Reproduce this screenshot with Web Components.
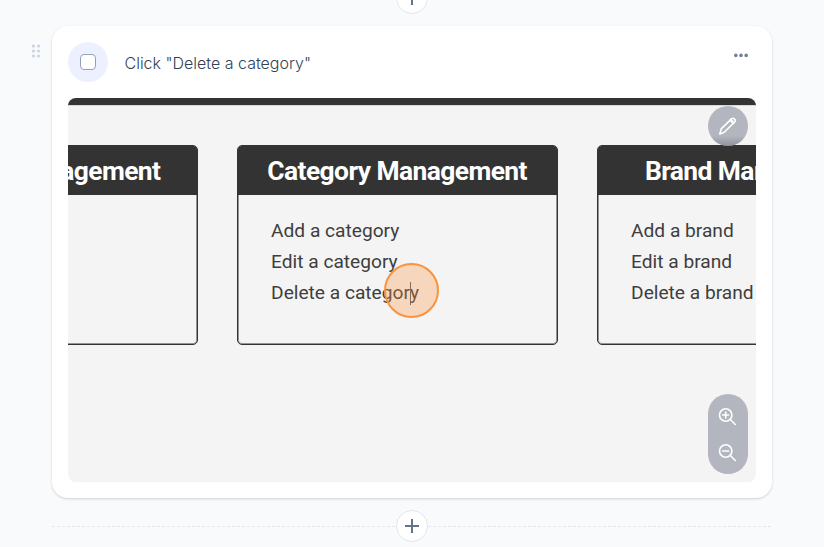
<!DOCTYPE html>
<html lang="en">
<head>
<meta charset="utf-8">
<title>Guide step</title>
<style>
html,body{margin:0;height:100%;overflow:hidden}
body{background:#f9fafc;font-family:Inter,sans-serif;color:#334155}
</style>
</head>
<body>
<guide-page>
  <add-step plain></add-step>
  <step-card>
    <span slot="title">Click "Delete a category"</span>
    <screen-shot>
      <menu-panel><span slot="head">agement</span></menu-panel>
      <menu-panel><span slot="head">Category Management</span><span>Add a category</span><span>Edit a category</span><span>Delete a category</span></menu-panel>
      <menu-panel><span slot="head">Brand Man</span><span>Add a brand</span><span>Edit a brand</span><span>Delete a brand</span></menu-panel>
    </screen-shot>
  </step-card>
  <add-step></add-step>
</guide-page>
<script>
const define = (name, html) => customElements.define(name, class extends HTMLElement {
  constructor() { super(); this.attachShadow({mode: 'open'}).innerHTML = html; }
});

define('guide-page', `<style>
:host{display:flex;flex-direction:column;width:720px;margin:-18px auto 0;gap:12px}
</style><slot></slot>`);

define('add-step', `<style>
:host{display:flex;align-items:center;height:32px}
i{flex:1;height:1px;background:repeating-linear-gradient(90deg,#e2e8f0 0 3px,transparent 3px 5px)}
:host([plain]) i{visibility:hidden}
button{box-sizing:border-box;width:32px;height:32px;padding:0;border:1px solid #e2e8f0;border-radius:50%;background:#fff;display:grid;place-items:center}
svg{display:block}
</style><i></i><button aria-label="Add step"><svg width="14" height="14" viewBox="0 0 14 14"><path d="M7 0V14M0 7H14" stroke="#64748b" stroke-width="2"/></svg></button><i></i>`);

define('step-card', `<style>
:host{display:block;position:relative;box-sizing:border-box;height:472px;padding:16px;border-radius:16px;background:#fff;box-shadow:0 1px 3px rgba(15,23,42,.12),0 1px 2px rgba(15,23,42,.06)}
header{display:flex;height:40px;margin-bottom:16px;align-items:center}
.tick{width:40px;height:40px;border-radius:50%;background:#edf1ff;display:grid;place-items:center;margin-right:16.5px}
.box{box-sizing:border-box;width:16px;height:16px;border:1px solid #94a3b8;border-radius:4px;background:#fff}
.title{flex:1;font-size:16px;font-weight:350;line-height:24px;padding-top:2px;letter-spacing:0}
.more{align-self:flex-start;margin:11px 7px 0 0;display:block}
.grip{position:absolute;left:-20px;top:18px}
</style>
<svg class="grip" width="9" height="14" viewBox="0 0 9 14" fill="#cbd5e1"><circle cx="1.5" cy="2" r="1.6"/><circle cx="6.5" cy="2" r="1.6"/><circle cx="1.5" cy="7" r="1.6"/><circle cx="6.5" cy="7" r="1.6"/><circle cx="1.5" cy="12" r="1.6"/><circle cx="6.5" cy="12" r="1.6"/></svg>
<header><div class="tick"><div class="box"></div></div><div class="title"><slot name="title"></slot></div>
<svg class="more" width="16" height="5" viewBox="0 0 16 5" fill="#718096"><circle cx="2.8" cy="2.4" r="1.8"/><circle cx="8" cy="2.4" r="1.8"/><circle cx="13.2" cy="2.4" r="1.8"/></svg></header>
<slot></slot>`);

define('screen-shot', `<style>
:host{display:block;position:relative;height:384px;border-radius:8px;overflow:hidden;background:#f4f4f4;font-family:Roboto,sans-serif;color:#3e3e3e}
.bar{height:7px;background:#333;border-bottom:1px solid #d8d8d8}
.row{display:flex;gap:39px;width:1041px;margin:39.4px 0 0 -190.6px}
.click{position:absolute;left:316px;top:165px;box-sizing:border-box;width:55px;height:55px;border-radius:50%;border:2px solid #fc923a;background:rgba(251,146,60,.3)}
.caret{position:absolute;left:342px;top:184px;width:1px;height:23px;background:#8b6954}
.tools{position:absolute;right:8px;top:8px;bottom:8px;display:flex;flex-direction:column;justify-content:space-between}
.tools div{box-sizing:border-box;width:40px;border-radius:20px;background:#b3b6bf;display:flex;flex-direction:column;align-items:center;justify-content:center}
.edit{height:40px;background:linear-gradient(#b3b6bf 75%,#8f9299)!important}
.zoom{height:80px;gap:16px;padding-top:1px}
svg{display:block;fill:none;stroke:#fff;stroke-width:1.6;stroke-linecap:round;stroke-linejoin:round}
</style>
<div class="bar"></div><div class="row"><slot></slot></div><div class="click"></div><div class="caret"></div>
<div class="tools"><div class="edit"><svg width="20" height="20" viewBox="0 0 20 20"><path d="M1.8 18L3.2 12.9L13.5 2.9Q15.1 1.6 16.6 3Q18 4.4 16.6 6L6.3 16.3Z"/><path d="M12.6 4L15.4 6.8" stroke-width="2.6"/></svg></div>
<div class="zoom"><svg width="20" height="20" viewBox="0 0 20 20"><circle cx="7.7" cy="8" r="6.2"/><path d="M12.3 12.5L17.3 17.5M7.7 5V11M4.7 8H10.7"/></svg><svg width="20" height="20" viewBox="0 0 20 20"><circle cx="7.7" cy="8" r="6.2"/><path d="M12.3 12.5L17.3 17.5M4.7 8H10.7"/></svg></div></div>`);

define('menu-panel', `<style>
:host{display:block;flex:none;box-sizing:border-box;width:321px;height:200px;border:1px solid #333;box-shadow:inset 0 0 0 1px rgba(51,51,51,.5);border-radius:5px;overflow:hidden}
h2{margin:0;height:49px;background:#333;color:#fff;font-size:26.4px;font-weight:700;line-height:51px;letter-spacing:-.58px;text-align:center;white-space:nowrap;padding-right:1.5px}
div{display:flex;flex-direction:column;padding:19.6px 0 0 32.7px;font-size:19.15px;line-height:31.2px;white-space:nowrap}
:host(:first-child) h2{text-align:right;padding-right:37px}
:host(:last-child) h2{text-align:left;padding-left:46.5px}
</style><h2><slot name="head"></slot></h2><div><slot></slot></div>`);
</script>
</body>
</html>
